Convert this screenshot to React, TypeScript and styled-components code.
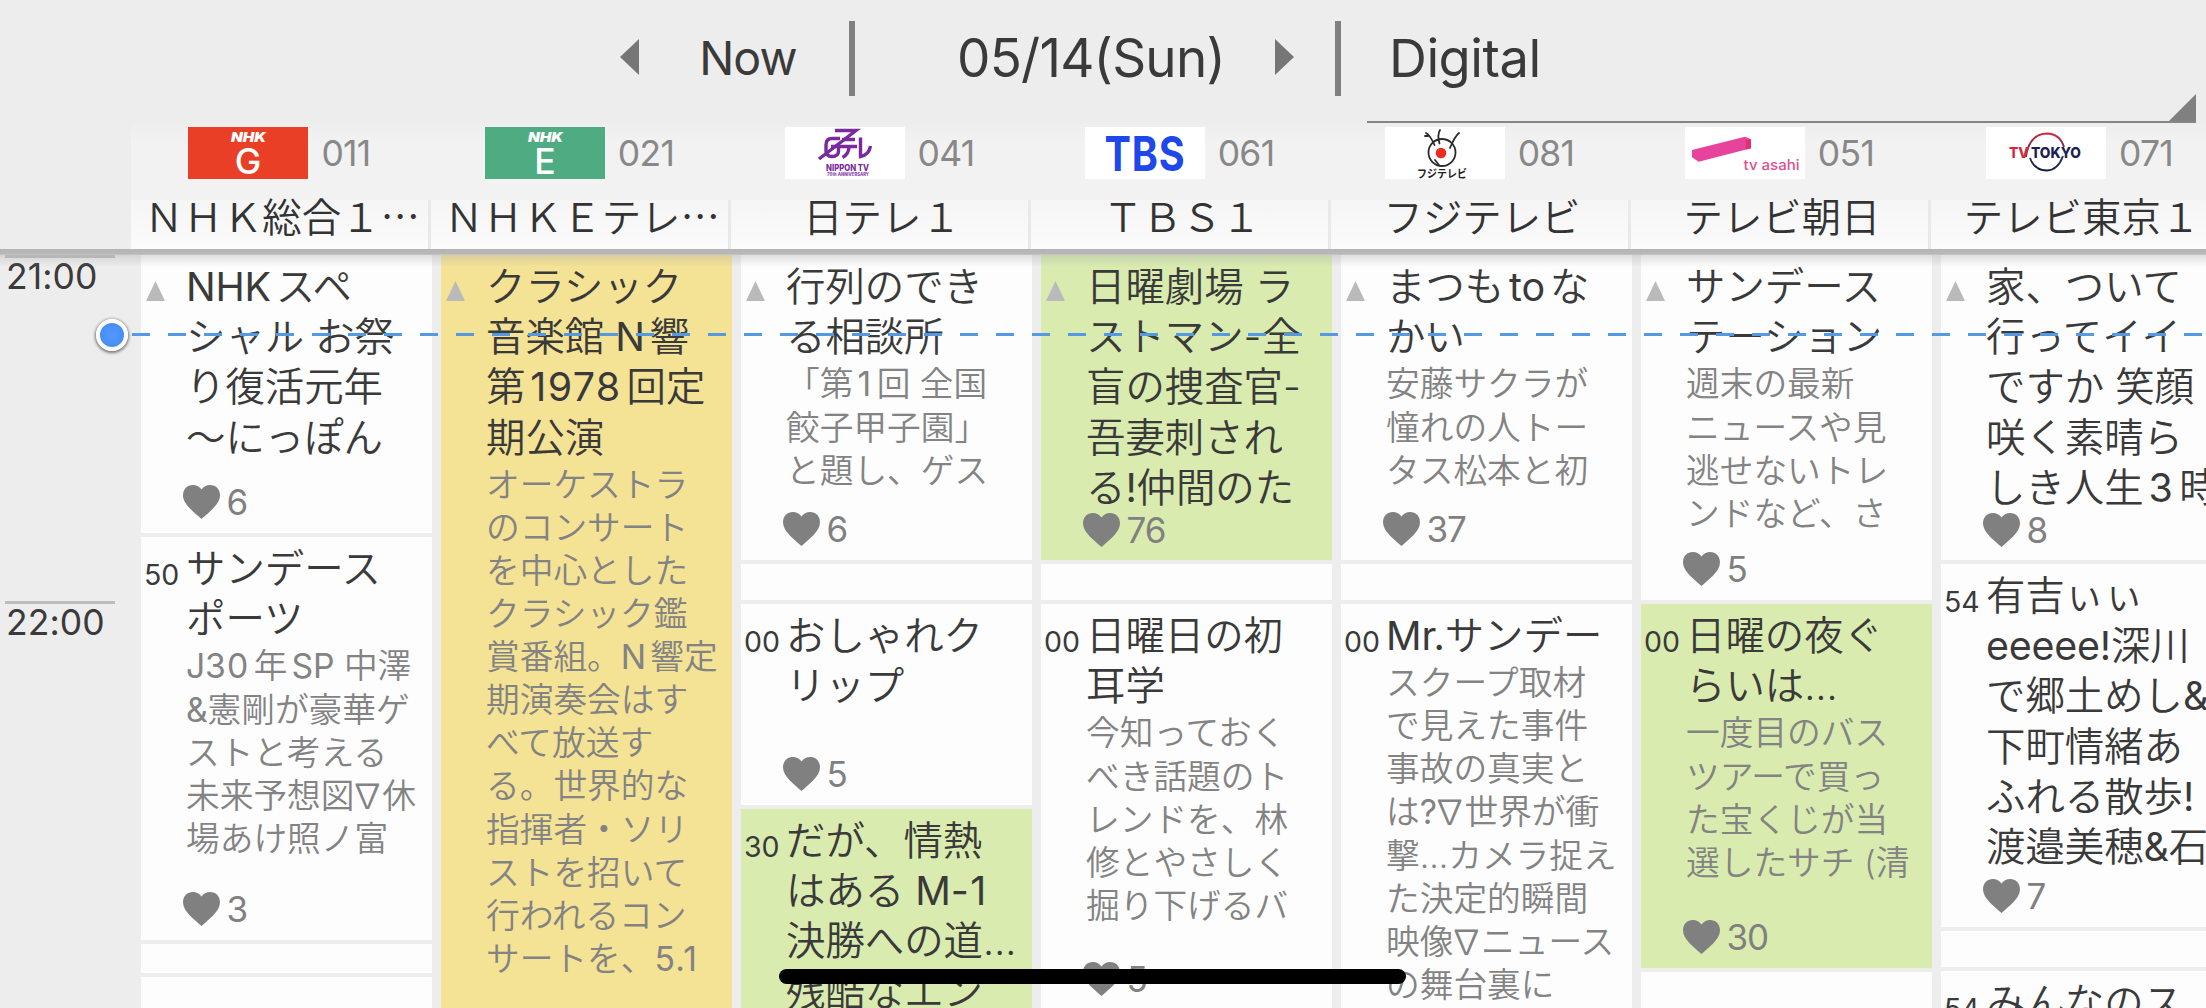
import React from 'react'
import styled, { createGlobalStyle } from 'styled-components'

const GlobalStyle = createGlobalStyle`
  * {
    box-sizing: border-box;
  }

  body {
    margin: 0;
    background: #ededed;
    color: #3a3a3a;
    font-family: Inter, 'Noto Sans CJK JP', sans-serif;
    overflow: hidden;
  }
`

type Tone = 'plain' | 'yellow' | 'green'

const TONES: Record<Tone, string> = {
  plain: '#fdfdfd',
  yellow: '#f4e295',
  green: '#d9ebaf'
}

interface Program {
  height: number
  tone?: Tone
  minute?: string
  continued?: boolean
  title?: string
  description?: string
  likes?: number
}

interface Channel {
  name: string
  number: string
  logo: React.ReactNode
  programs: Program[]
}

const Page = styled.div`
  position: relative;
  display: flex;
  flex-direction: column;
  width: 2206px;
  height: 1008px;
  overflow: hidden;
  background: #ededed;
`

const Toolbar = styled.header`
  display: flex;
  align-items: flex-start;
  height: 124px;
  padding-left: 620px;
  flex: none;
`

const ArrowIcon = styled.svg`
  width: 19px;
  height: 36px;
  margin-top: 39px;
  fill: #767676;
`

const ToolbarLabel = styled.div<{ $width: number; $size: number; $indent: number }>`
  width: ${({ $width }) => $width}px;
  height: 116px;
  padding-left: ${({ $indent }) => $indent}px;
  line-height: 116px;
  font-size: ${({ $size }) => $size}px;
  letter-spacing: -0.8px;
  text-align: center;
  white-space: nowrap;
`

const Divider = styled.div<{ $gap?: number }>`
  width: 6px;
  height: 75px;
  margin: 21px 0 0 ${({ $gap = 0 }) => $gap}px;
  background: #808080;
`

const Spinner = styled.div`
  display: flex;
  justify-content: space-between;
  align-items: flex-end;
  width: 829px;
  height: 123px;
  margin-left: 26px;
  padding-left: 22px;
  border-bottom: 2px solid #858585;
  line-height: 116px;
`

const SpinnerText = styled.div`
  align-self: flex-start;
  font-size: 52.5px;
  letter-spacing: -0.5px;
`

const SpinnerCorner = styled.svg`
  width: 27px;
  height: 27px;
  fill: #808080;
`

const ChannelBar = styled.div`
  display: flex;
  flex: none;
  height: 125px;
  padding-left: 131px;
`

const ChannelHead = styled.div`
  display: flex;
  flex-direction: column;
  flex: none;
  width: 300px;
  background: linear-gradient(#eeeeee, #f2f2f2 20px);
`

const ChannelLogoRow = styled.div`
  display: flex;
  justify-content: center;
  align-items: center;
  gap: 13px;
  height: 76px;
  padding: 0 3px 18px 0;
  color: #888;
  font-size: 35.5px;
  letter-spacing: -0.7px;

  svg {
    display: block;
    flex: none;
    width: 120px;
    height: 52px;
  }
`

const ChannelName = styled.div`
  height: 49px;
  padding-left: 5px;
  border-right: 3px solid #e9e9e9;
  background: linear-gradient(#f5f5f5, #fbfbfb);
  color: #333;
  font-family: 'Noto Sans CJK JP', sans-serif;
  font-weight: 350;
  font-size: 39.4px;
  line-height: 29px;
  text-align: center;
  white-space: nowrap;
`

const HeaderShadow = styled.div`
  position: absolute;
  top: 249px;
  left: 0;
  right: 0;
  height: 18px;
  background: linear-gradient(#b4b4b4 0, #b8b8b8 28%, rgba(170, 170, 170, 0.35) 36%, rgba(180, 180, 180, 0));
`

const Schedule = styled.main`
  display: flex;
  flex: none;
  height: 759px;
  padding-top: 6px;
`

const TimeAxis = styled.div`
  flex: none;
  width: 141px;
  padding-left: 5px;
`

const Hour = styled.div`
  width: 110px;
  height: 346px;
  padding: 0 0 0 1px;
  border-top: 3px solid #bdbdbd;
  font-size: 35.5px;
  letter-spacing: 0.1px;
  line-height: 38px;
`

const Column = styled.div`
  display: flex;
  flex-direction: column;
  flex: none;
  gap: 4px;
  width: 300px;
  padding-right: 9px;
`

const Cell = styled.section<{ $height: number; $tone: Tone }>`
  display: grid;
  grid-template-columns: 45px 1fr;
  grid-template-rows: auto 1fr auto;
  flex: none;
  height: ${({ $height }) => $height}px;
  padding: 7px 0 14px;
  background: ${({ $tone }) => TONES[$tone]};
  overflow: hidden;
`

const Minute = styled.div`
  height: 50px;
  padding: 1px 0 0 3px;
  font-size: 28.5px;
  line-height: 59px;
  letter-spacing: 0;
`

const ContinuedIcon = styled.svg`
  width: 19px;
  height: 20px;
  margin: 19px 0 0 5px;
  fill: #bababa;
`

const Title = styled.h2`
  grid-column: 2;
  margin: 0;
  font-weight: 350;
  font-size: 39.4px;
  line-height: 50.2px;
  white-space: pre;
  text-autospace: normal;
`

const Description = styled.p`
  grid-column: 2;
  margin: 0;
  color: #838383;
  font-weight: 350;
  font-size: 33.7px;
  line-height: 43.1px;
  white-space: pre;
  text-autospace: normal;
`

const Digits = styled.span`
  font-weight: 400;
  letter-spacing: 0.035em;
`

const Latin = styled.span`
  font-weight: 400;
  letter-spacing: -0.005em;
`

const Nabla = styled.span`
  margin-left: -4px;
  letter-spacing: -2px;
`

const Likes = styled.div`
  grid-column: 2;
  grid-row: 3;
  display: flex;
  align-items: center;
  gap: 7px;
  height: 34px;
  margin-left: -3.5px;
  color: #808080;
  font-size: 35px;
  line-height: 34px;
  letter-spacing: -1px;

  svg {
    width: 37px;
    height: 34px;
    fill: #808080;
  }
`

const NowMarker = styled.div`
  position: absolute;
  top: 318px;
  left: 96px;
  right: 0;
  display: flex;
  align-items: center;
  gap: 4px;
  height: 33px;
`

const NowDot = styled.div`
  width: 32px;
  height: 32px;
  border: 4px solid #fff;
  border-radius: 50%;
  background: radial-gradient(#5298ff, #4089f0);
  box-shadow: 0 1px 3px 1px rgba(0, 0, 0, 0.5);
`

const NowLine = styled.div`
  flex: 1;
  height: 3px;
  background: repeating-linear-gradient(90deg, #5499e2 0 18px, transparent 18px 36px);
`

const HomeIndicator = styled.div`
  position: absolute;
  top: 969px;
  left: 779px;
  width: 627px;
  height: 15px;
  border-radius: 8px;
  background: #000;
`

const NhkLogo = ({ letter, color }: { letter: string; color: string }) => (
  <svg viewBox="0 0 120 52">
    <rect width="120" height="52" fill={color} />
    <text
      x="43"
      y="15"
      fontSize="12.5"
      fontWeight="900"
      fontStyle="italic"
      fill="#fff"
      textLength="35"
      lengthAdjust="spacingAndGlyphs"
      letterSpacing="0"
    >
      NHK
    </text>
    <text x="60" y="46.5" fontSize="35.5" fontWeight="500" fill="#fff" textAnchor="middle" letterSpacing="0">
      {letter}
    </text>
  </svg>
)

const NipponTvLogo = () => (
  <svg viewBox="0 0 120 52">
    <rect width="120" height="52" fill="#fff" />
    <g fill="none" stroke="#7a2a9c" strokeWidth="3.4">
      <path d="M50 3.5H71L34 32" />
      <path d="M55 11.5H47Q41 11.5 41 18V24Q41 29.5 47 29.5Q53.5 29.5 53.5 24V19.5H46" />
      <path d="M57 12.5H70M55 19.5H72M64 19.5Q64 27 57.5 30.5" />
      <path d="M75.5 10.5V29.5Q84 28 85.5 19" />
    </g>
    <text x="41" y="43.5" fontSize="8.5" fontWeight="800" fill="#7a2a9c" textLength="43" lengthAdjust="spacingAndGlyphs" letterSpacing="0">
      NIPPON TV
    </text>
    <text x="42" y="49" fontSize="4.5" fontWeight="800" fill="#8a46aa" textLength="42" lengthAdjust="spacingAndGlyphs" letterSpacing="0">
      70th ANNIVERSARY
    </text>
  </svg>
)

const TbsLogo = () => (
  <svg viewBox="0 0 120 52">
    <rect width="120" height="52" fill="#fff" />
    <text x="19.5" y="44" fontSize="48" fontWeight="750" fill="#1f48ea" textLength="81" lengthAdjust="spacingAndGlyphs" letterSpacing="1">
      TBS
    </text>
  </svg>
)

const FujiLogo = () => (
  <svg viewBox="0 0 120 52">
    <rect width="120" height="52" fill="#fff" />
    <g fill="none" stroke="#2b2b2b" strokeWidth="1.8" strokeLinecap="round">
      <circle cx="57" cy="25.5" r="13.5" />
      <path d="M41 6Q45 8 49.5 18M43 9L40 9M55 3Q52 8 54.5 16.5M74 6Q70 9 65 21M50 33L54 38" />
    </g>
    <circle cx="56" cy="26" r="5.3" fill="#ee2a22" />
    <text x="32" y="50.5" fontSize="11" fontWeight="700" fill="#222" textLength="50" lengthAdjust="spacingAndGlyphs" letterSpacing="0">
      フジテレビ
    </text>
  </svg>
)

const AsahiLogo = () => (
  <svg viewBox="0 0 120 52">
    <rect width="120" height="52" fill="#fff" />
    <path d="M7 23L60 9.7L66 12.3V21.3L13.7 34.7L7 30.3Z" fill="#e8439c" />
    <path d="M61 13L66 12.3V21.3L61 22.5Z" fill="#e2306f" />
    <text x="58.5" y="42.5" fontSize="14.5" fontWeight="500" fill="#de4f92" textLength="56" lengthAdjust="spacingAndGlyphs" letterSpacing="0">
      tv asahi
    </text>
  </svg>
)

const TvTokyoLogo = () => (
  <svg viewBox="0 0 120 52">
    <defs>
      <linearGradient id="tokyo-ring" x1="0" y1="0" x2="0" y2="1">
        <stop offset="0" stopColor="#d4283c" />
        <stop offset="0.6" stopColor="#30365f" />
        <stop offset="1" stopColor="#111b3d" />
      </linearGradient>
    </defs>
    <rect width="120" height="52" fill="#fff" />
    <path
      d="M40 30Q43 7 61 6.5Q74 7 78 20M77 29Q72 43 61 43.5Q48 43 44 31"
      fill="none"
      stroke="url(#tokyo-ring)"
      strokeWidth="1.9"
    />
    <text x="23" y="30.5" fontSize="14.5" fontWeight="800" fill="#d4283c" textLength="20" lengthAdjust="spacingAndGlyphs" letterSpacing="0">
      TV
    </text>
    <text x="45" y="30.5" fontSize="14.5" fontWeight="800" fill="#1b2150" textLength="50" lengthAdjust="spacingAndGlyphs" letterSpacing="0">
      TOKYO
    </text>
  </svg>
)

const channels: Channel[] = [
  {
    name: 'ＮＨＫ総合１…',
    number: '011',
    logo: <NhkLogo letter="G" color="#e93f26" />,
    programs: [
      { height: 278, continued: true, title: 'NHKスペ\nシャル お祭\nり復活元年\n～にっぽん', likes: 6 },
      {
        height: 403,
        minute: '50',
        title: 'サンデース\nポーツ',
        description: 'J30年SP 中澤\n&憲剛が豪華ゲ\nストと考える\n未来予想図∇休\n場あけ照ノ富',
        likes: 3
      },
      { height: 29 },
      { height: 60 }
    ]
  },
  {
    name: 'ＮＨＫＥテレ…',
    number: '021',
    logo: <NhkLogo letter="E" color="#4fac82" />,
    programs: [
      {
        height: 780,
        tone: 'yellow',
        continued: true,
        title: 'クラシック\n音楽館 N響\n第1978回定\n期公演',
        description:
          'オーケストラ\nのコンサート\nを中心とした\nクラシック鑑\n賞番組。N響定\n期演奏会はす\nべて放送す\nる。世界的な\n指揮者・ソリ\nストを招いて\n行われるコン\nサートを、5.1'
      }
    ]
  },
  {
    name: '日テレ１',
    number: '041',
    logo: <NipponTvLogo />,
    programs: [
      {
        height: 305,
        continued: true,
        title: '行列のでき\nる相談所',
        description: '「第1回 全国\n餃子甲子園」\nと題し、ゲス',
        likes: 6
      },
      { height: 36 },
      { height: 201, minute: '00', title: 'おしゃれク\nリップ', likes: 5 },
      { height: 240, tone: 'green', minute: '30', title: 'だが、情熱\nはある M-1\n決勝への道…\n残酷なエン' }
    ]
  },
  {
    name: 'ＴＢＳ１',
    number: '061',
    logo: <TbsLogo />,
    programs: [
      {
        height: 305,
        tone: 'green',
        continued: true,
        title: '日曜劇場 ラ\nストマン-全\n盲の捜査官-\n吾妻刺され\nる!仲間のた',
        likes: 76
      },
      { height: 36 },
      {
        height: 406,
        minute: '00',
        title: '日曜日の初\n耳学',
        description: '今知っておく\nべき話題のト\nレンドを、林\n修とやさしく\n掘り下げるバ',
        likes: 5
      }
    ]
  },
  {
    name: 'フジテレビ',
    number: '081',
    logo: <FujiLogo />,
    programs: [
      {
        height: 305,
        continued: true,
        title: 'まつもtoな\nかい',
        description: '安藤サクラが\n憧れの人トー\nタス松本と初',
        likes: 37
      },
      { height: 36 },
      {
        height: 450,
        minute: '00',
        title: 'Mr.サンデー',
        description:
          'スクープ取材\nで見えた事件\n事故の真実と\nは?∇世界が衝\n撃…カメラ捉え\nた決定的瞬間\n映像∇ニュース\nの舞台裏に'
      }
    ]
  },
  {
    name: 'テレビ朝日',
    number: '051',
    logo: <AsahiLogo />,
    programs: [
      {
        height: 345,
        continued: true,
        title: 'サンデース\nテーション',
        description: '週末の最新\nニュースや見\n逃せないトレ\nンドなど、さ',
        likes: 5
      },
      {
        height: 364,
        tone: 'green',
        minute: '00',
        title: '日曜の夜ぐ\nらいは…',
        description: '一度目のバス\nツアーで買っ\nた宝くじが当\n選したサチ (清',
        likes: 30
      },
      { height: 60 }
    ]
  },
  {
    name: 'テレビ東京１',
    number: '071',
    logo: <TvTokyoLogo />,
    programs: [
      {
        height: 305,
        continued: true,
        title: '家、ついて\n行ってイイ\nですか 笑顔\n咲く素晴ら\nしき人生3時',
        likes: 8
      },
      {
        height: 363,
        minute: '54',
        title: '有吉ぃぃ\neeeee!深川\nで郷土めし&\n下町情緒あ\nふれる散歩!\n渡邉美穂&石',
        likes: 7
      },
      { height: 36 },
      { height: 100, minute: '54', title: 'みんなのス' }
    ]
  }
]

// digits and latin runs are set a bit heavier and wider than the kana around them
const renderRuns = (text: string) =>
  text.split(/([0-9.-]*[0-9]|[A-Za-z&.!?]+|∇)/).map((run, index) => {
    if (/[0-9]$/.test(run)) return <Digits key={index}>{run}</Digits>
    if (/^[A-Za-z&.!?]/.test(run)) return <Latin key={index}>{run}</Latin>
    if (run === '∇') return <Nabla key={index}>{run}</Nabla>
    return run
  })

const ProgramCell = ({ height, tone = 'plain', minute, continued, title, description, likes }: Program) => (
  <Cell $height={height} $tone={tone}>
    {continued && (
      <ContinuedIcon viewBox="0 0 19 20">
        <path d="M9.5 0L19 20H0Z" />
      </ContinuedIcon>
    )}
    {minute && <Minute>{minute}</Minute>}
    {title && <Title>{renderRuns(title)}</Title>}
    {description && <Description>{renderRuns(description)}</Description>}
    {likes !== undefined && (
      <Likes>
        <svg viewBox="0 0 37 34">
          <path d="M18.5 34C12 28 0 19.5 0 10.5C0 4 4.5 0 9.7 0C13.5 0 16.8 1.8 18.5 4.6C20.2 1.8 23.5 0 27.3 0C32.5 0 37 4 37 10.5C37 19.5 25 28 18.5 34Z" />
        </svg>
        {likes}
      </Likes>
    )}
  </Cell>
)

const App = () => (
  <Page>
    <GlobalStyle />
    <Toolbar>
      <ArrowIcon viewBox="0 0 19 36">
        <path d="M19 0V36L0 18Z" />
      </ArrowIcon>
      <ToolbarLabel $width={210} $size={46.5} $indent={8}>
        Now
      </ToolbarLabel>
      <Divider />
      <ToolbarLabel $width={420} $size={53} $indent={52}>
        05/14(Sun)
      </ToolbarLabel>
      <ArrowIcon viewBox="0 0 19 36">
        <path d="M0 0V36L19 18Z" />
      </ArrowIcon>
      <Divider $gap={41} />
      <Spinner>
        <SpinnerText>Digital</SpinnerText>
        <SpinnerCorner viewBox="0 0 27 27">
          <path d="M27 0V27H0Z" />
        </SpinnerCorner>
      </Spinner>
    </Toolbar>
    <ChannelBar>
      {channels.map(({ name, number, logo }) => (
        <ChannelHead key={number}>
          <ChannelLogoRow>
            {logo}
            {number}
          </ChannelLogoRow>
          <ChannelName>{name}</ChannelName>
        </ChannelHead>
      ))}
    </ChannelBar>
    <Schedule>
      <TimeAxis>
        <Hour>21:00</Hour>
        <Hour>22:00</Hour>
      </TimeAxis>
      {channels.map(({ number, programs }) => (
        <Column key={number}>
          {programs.map((program, index) => (
            <ProgramCell key={index} {...program} />
          ))}
        </Column>
      ))}
    </Schedule>
    <HeaderShadow />
    <NowMarker>
      <NowDot />
      <NowLine />
    </NowMarker>
    <HomeIndicator />
  </Page>
)

export default App
